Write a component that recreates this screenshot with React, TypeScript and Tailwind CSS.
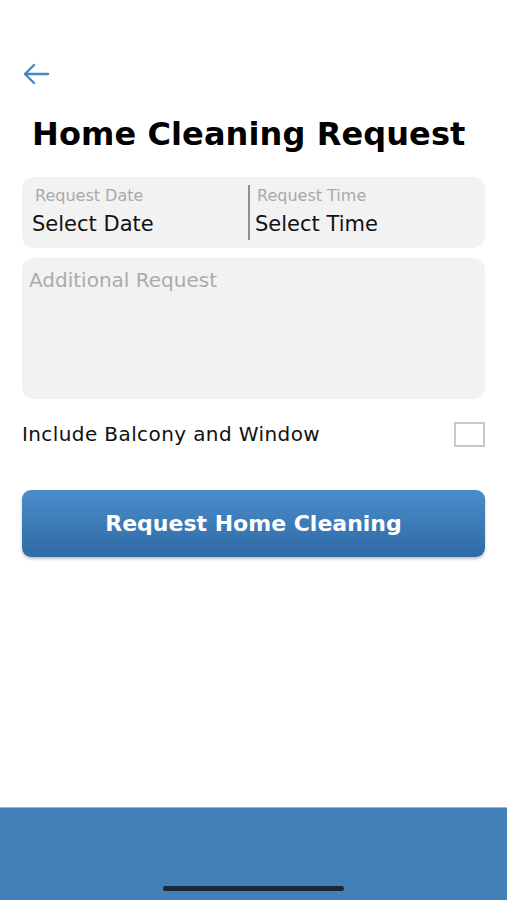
import React from "react";

export default function App() {
  const font = { fontFamily: '"DejaVu Sans", "Noto Sans", sans-serif' };
  return (
    <div className="w-[507px] h-[900px] bg-white flex flex-col" style={font}>
      <div className="flex-1 flex flex-col px-[22px]">
        <div className="pt-[62px] h-[88px]">
          <svg width="28" height="24" viewBox="0 0 28 24" fill="none" stroke="#4a86c5" strokeWidth="2.4" strokeLinecap="round" strokeLinejoin="round">
            <path d="M26 12H3" />
            <path d="M12 3L3 12l9 9" />
          </svg>
        </div>
        <h1 className="mt-[26px] pl-[10px] text-[32px] leading-[40px] font-bold text-black tracking-[0.1px]">
          Home Cleaning Request
        </h1>
        <div className="mt-[23px] h-[71px] rounded-[12px] bg-[#f2f2f2] flex items-stretch">
          <div className="w-[226px] flex flex-col pl-[10px] pt-[9px]">
            <span className="text-[16px] leading-[20px] text-[#a9a9a9] pl-[3px]">Request Date</span>
            <span className="text-[21px] leading-[26px] text-[#111] mt-[5px]">Select Date</span>
          </div>
          <div className="w-[2px] bg-[#8f8f8f] my-[8px]" />
          <div className="flex-1 flex flex-col pl-[5px] pt-[9px]">
            <span className="text-[16px] leading-[20px] text-[#a9a9a9] pl-[2px]">Request Time</span>
            <span className="text-[21px] leading-[26px] text-[#111] mt-[5px]">Select Time</span>
          </div>
        </div>
        <div className="mt-[10px] h-[141px] rounded-[12px] bg-[#f2f2f2] px-[7px] pt-[9px]">
          <span className="text-[20px] leading-[26px] text-[#ababab]">Additional Request</span>
        </div>
        <div className="mt-[21px] h-[28px] flex items-center justify-between">
          <span className="text-[20px] leading-[28px] text-[#111] tracking-[0.4px]">Include Balcony and Window</span>
          <div className="w-[31px] h-[25px] border-2 border-[#c8c8c8] bg-white" />
        </div>
        <button className="mt-[42px] h-[67px] rounded-[9px] bg-gradient-to-b from-[#4b8dcb] to-[#2f6aa4] text-white font-bold text-[22px] shadow-[0_2px_3px_rgba(0,0,0,0.25)]">
          Request Home Cleaning
        </button>
      </div>
      <div className="h-[93px] bg-[#4480b8] border-t border-[#9db5cc] flex items-end justify-center pb-[9px]">
        <div className="w-[181px] h-[5px] rounded-full bg-[#1c2735]" />
      </div>
    </div>
  );
}
